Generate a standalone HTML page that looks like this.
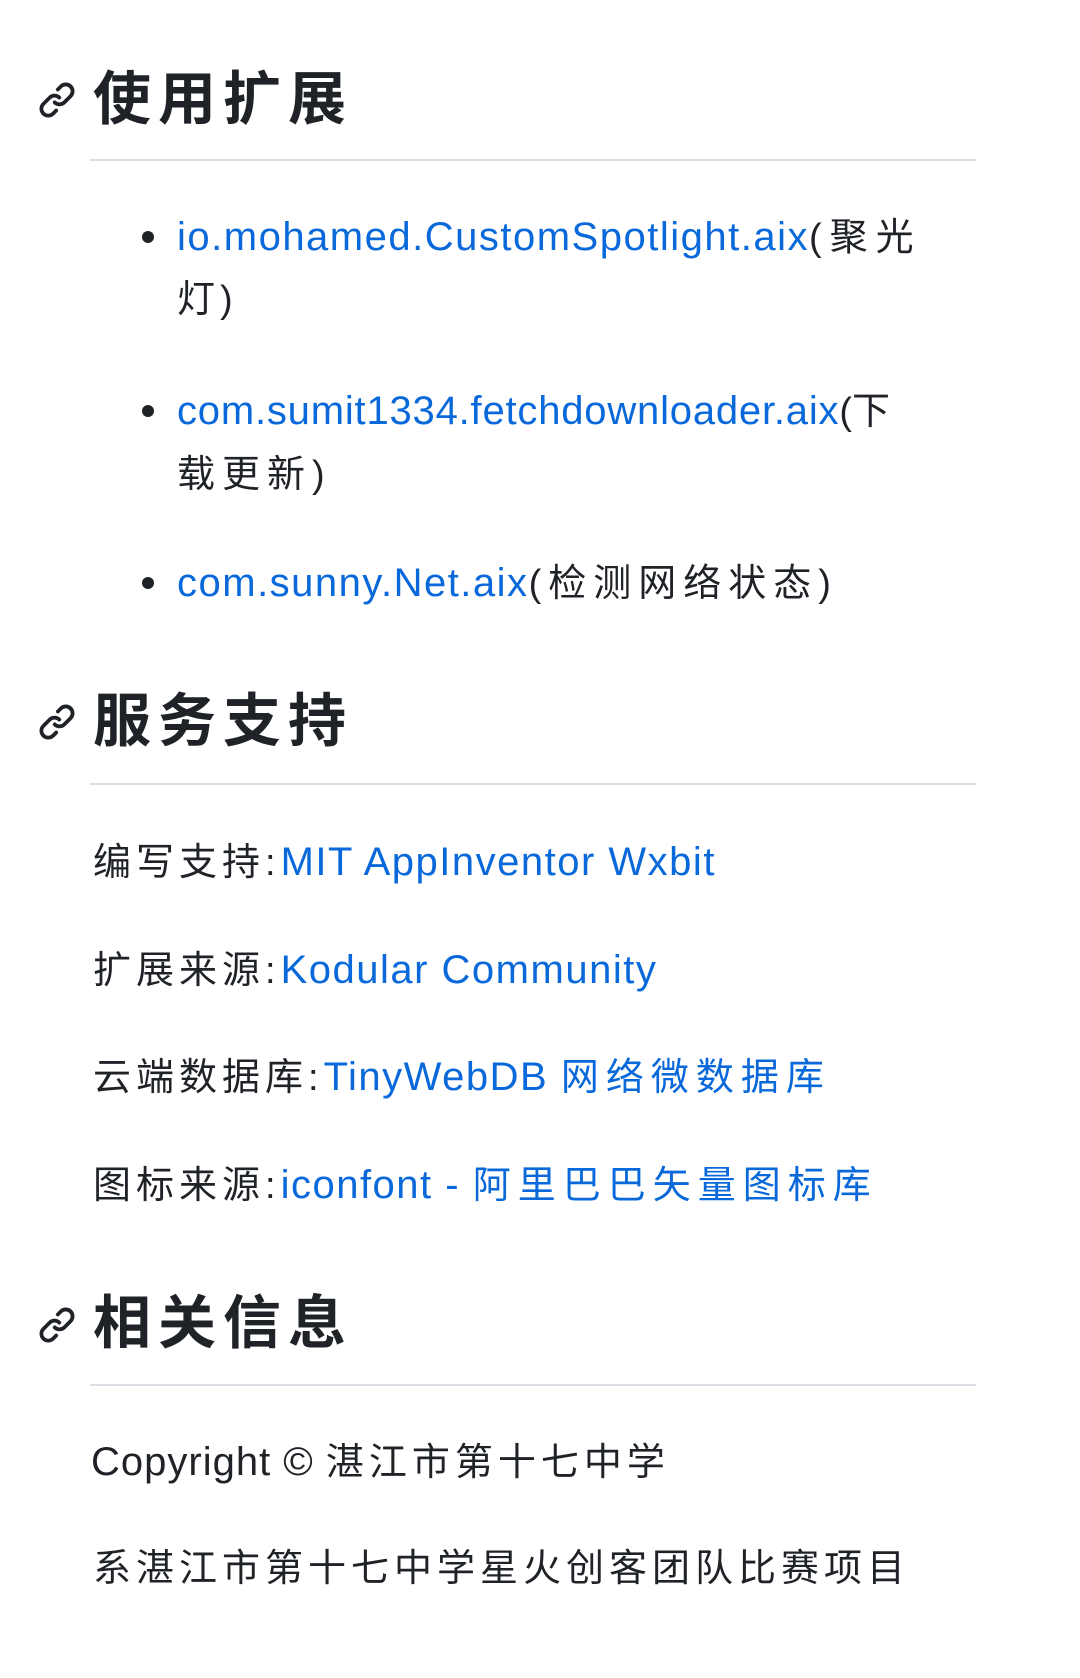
<!DOCTYPE html>
<html><head><meta charset="utf-8"><style>
body{margin:0;width:1080px;height:1678px;background:#fff;position:relative;overflow:hidden;font-family:"Liberation Sans","Noto Sans CJK SC",sans-serif;color:#1f2328}
.l{position:absolute;white-space:nowrap;height:60px;line-height:60px;font-size:38px}
.h{position:absolute;white-space:nowrap;height:80px;line-height:80px;font-size:58px;font-weight:bold;left:93px;letter-spacing:7px}
.hr{position:absolute;left:90px;width:886px;height:2px;background:#d8dee4}
a{color:#0969da;text-decoration:none;font-size:40px;letter-spacing:1.5px}
.ic{position:absolute;left:37px;width:40px;height:40px}
.b{position:absolute;left:142px;width:12px;height:12px;border-radius:50%;background:#1f2328}
.cj{letter-spacing:5px}
a .cj{font-size:38px;letter-spacing:7px}
</style></head><body>
<svg class="ic" style="top:80px" viewBox="0 0 16 16"><path fill="#1f2328" d="m7.775 3.275 1.25-1.25a3.5 3.5 0 1 1 4.950 4.95l-2.5 2.5a3.5 3.5 0 0 1-4.95 0 .751.751 0 0 1 .018-1.042.751.751 0 0 1 1.042-.018 1.998 1.998 0 0 0 2.83 0l2.5-2.5a2.002 2.002 0 0 0-2.83-2.830l-1.25 1.250a.751.751 0 0 1-1.042-.018.751.751 0 0 1-.018-1.042Zm-4.69 9.64a1.998 1.998 0 0 0 2.83 0l1.25-1.25a.751.751 0 0 1 1.042.018.751.751 0 0 1 .018 1.042l-1.25 1.25a3.5 3.5 0 1 1-4.95-4.95l2.5-2.5a3.5 3.5 0 0 1 4.95 0 .751.751 0 0 1-.018 1.042.751.751 0 0 1-1.042.018 1.998 1.998 0 0 0-2.83 0l-2.5 2.5a1.998 1.998 0 0 0 0 2.83Z"/></svg>
<div class="h" style="top:60px">使用扩展</div>
<div class="hr" style="top:159px"></div>
<div class="b" style="top:231px"></div>
<div class="l" style="left:177px;top:207px"><a>io.mohamed.CustomSpotlight.aix</a><span style="letter-spacing:8px">(聚光</span></div>
<div class="l cj" style="left:177px;top:270px">灯)</div>
<div class="b" style="top:405px"></div>
<div class="l" style="left:177px;top:381px"><a style="letter-spacing:0.8px">com.sumit1334.fetchdownloader.aix</a>(下</div>
<div class="l cj" style="left:177px;top:445px;letter-spacing:7px">载更新)</div>
<div class="b" style="top:577px"></div>
<div class="l" style="left:177px;top:553px"><a>com.sunny.Net.aix</a><span style="letter-spacing:7px">(检测网络状态)</span></div>
<svg class="ic" style="top:702px" viewBox="0 0 16 16"><path fill="#1f2328" d="m7.775 3.275 1.25-1.25a3.5 3.5 0 1 1 4.95 4.95l-2.5 2.5a3.5 3.5 0 0 1-4.95 0 .751.751 0 0 1 .018-1.042.751.751 0 0 1 1.042-.018 1.998 1.998 0 0 0 2.83 0l2.5-2.5a2.002 2.002 0 0 0-2.83-2.83l-1.25 1.25a.751.751 0 0 1-1.042-.018.751.751 0 0 1-.018-1.042Zm-4.69 9.64a1.998 1.998 0 0 0 2.83 0l1.25-1.25a.751.751 0 0 1 1.042.018.751.751 0 0 1 .018 1.042l-1.25 1.25a3.5 3.5 0 1 1-4.95-4.950l2.5-2.5a3.5 3.5 0 0 1 4.95 0 .751.751 0 0 1-.018 1.042.751.751 0 0 1-1.042.018 1.998 1.998 0 0 0-2.83 0l-2.5 2.5a1.998 1.998 0 0 0 0 2.83Z"/></svg>
<div class="h" style="top:682px">服务支持</div>
<div class="hr" style="top:783px"></div>
<div class="l" style="left:93px;top:832px"><span class="cj">编写支持:</span><a>MIT AppInventor Wxbit</a></div>
<div class="l" style="left:93px;top:940px"><span class="cj">扩展来源:</span><a>Kodular Community</a></div>
<div class="l" style="left:93px;top:1047px"><span class="cj">云端数据库:</span><a>TinyWebDB <span class="cj">网络微数据库</span></a></div>
<div class="l" style="left:93px;top:1155px"><span class="cj">图标来源:</span><a>iconfont - <span class="cj">阿里巴巴矢量图标库</span></a></div>
<svg class="ic" style="top:1305px" viewBox="0 0 16 16"><path fill="#1f2328" d="m7.775 3.275 1.25-1.25a3.5 3.5 0 1 1 4.95 4.95l-2.5 2.5a3.5 3.5 0 0 1-4.95 0 .751.751 0 0 1 .018-1.042.751.751 0 0 1 1.042-.018 1.998 1.998 0 0 0 2.83 0l2.5-2.5a2.002 2.002 0 0 0-2.83-2.83l-1.25 1.25a.751.751 0 0 1-1.042-.018.751.751 0 0 1-.018-1.042Zm-4.69 9.64a1.998 1.998 0 0 0 2.83 0l1.25-1.25a.751.751 0 0 1 1.042.018.751.751 0 0 1 .018 1.042l-1.25 1.25a3.5 3.5 0 1 1-4.95-4.95l2.5-2.5a3.5 3.5 0 0 1 4.95 0 .751.751 0 0 1-.018 1.042.751.751 0 0 1-1.042.018 1.998 1.998 0 0 0-2.83 0l-2.5 2.5a1.998 1.998 0 0 0 0 2.83Z"/></svg>
<div class="h" style="top:1284px">相关信息</div>
<div class="hr" style="top:1384px"></div>
<div class="l" style="left:91px;top:1432px"><span style="font-size:40px;letter-spacing:1px">Copyright © </span><span class="cj">湛江市第十七中学</span></div>
<div class="l cj" style="left:93px;top:1539px">系湛江市第十七中学星火创客团队比赛项目</div>
</body></html>
